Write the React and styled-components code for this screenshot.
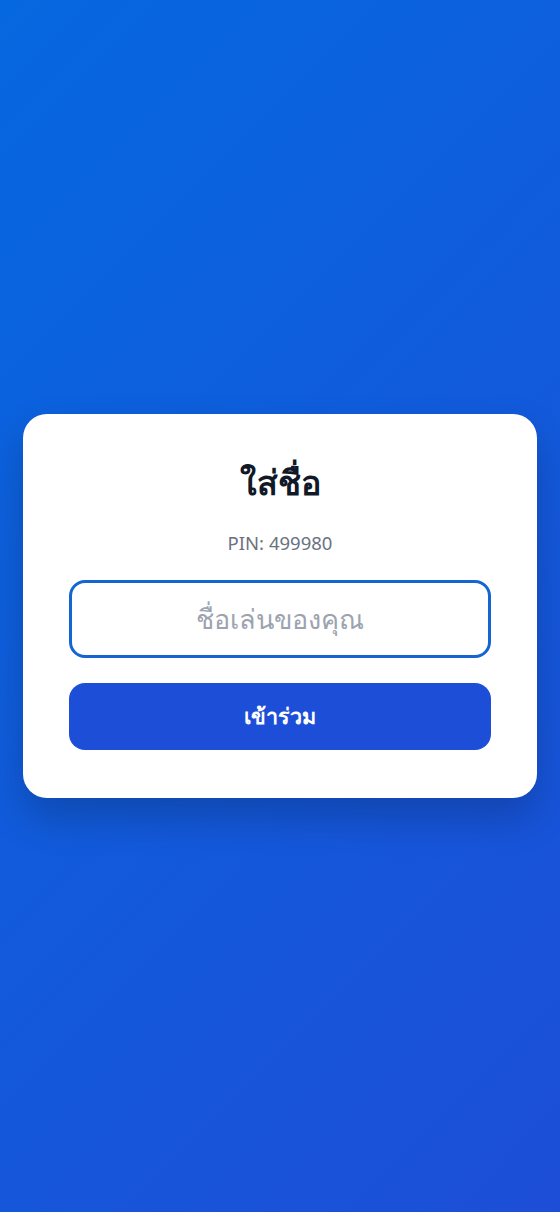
import React from "react";
import styled, { createGlobalStyle } from "styled-components";

const Global = createGlobalStyle`
  html, body { margin: 0; padding: 0; }
  body { font-family: "Noto Sans", "Open Sans", sans-serif; }
  * { box-sizing: border-box; }
`;

const Page = styled.div`
  min-height: 1212px;
  display: flex;
  align-items: center;
  justify-content: center;
  padding: 0 23px;
  background: linear-gradient(135deg, #0668e0 0%, #1d4ed8 100%);
`;

const Card = styled.div`
  width: 100%;
  background: #ffffff;
  border-radius: 24px;
  padding: 43px 46px 48px;
  box-shadow: 0 20px 40px rgba(0, 0, 0, 0.2);
  display: flex;
  flex-direction: column;
  align-items: stretch;
`;

const Title = styled.h1`
  margin: 0;
  text-align: center;
  font-size: 34px;
  font-weight: 700;
  color: #111827;
  line-height: 1.5;
`;

const Pin = styled.p`
  margin: 22px 0 0;
  text-align: center;
  font-size: 18.5px;
  color: #6b7280;
  line-height: 1.4;
`;

const Input = styled.input`
  margin-top: 24px;
  height: 78px;
  width: 100%;
  border: 3px solid #1565d0;
  border-radius: 16px;
  font-family: inherit;
  font-size: 27px;
  text-align: center;
  color: #111827;
  outline: none;
  &::placeholder { color: #9ca3af; }
`;

const Button = styled.button`
  margin-top: 25px;
  height: 67px;
  width: 100%;
  border: none;
  border-radius: 16px;
  background: #1d4ed8;
  color: #ffffff;
  font-family: inherit;
  font-size: 21.5px;
  font-weight: 700;
`;

export default function App() {
  return (
    <>
      <Global />
      <Page>
        <Card>
          <Title>ใส่ชื่อ</Title>
          <Pin>PIN: 499980</Pin>
          <Input placeholder="ชื่อเล่นของคุณ" />
          <Button>เข้าร่วม</Button>
        </Card>
      </Page>
    </>
  );
}
